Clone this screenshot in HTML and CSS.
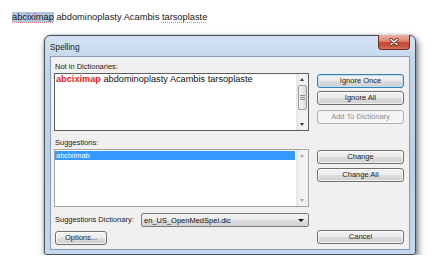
FILE: index.html
```html
<!DOCTYPE html>
<html>
<head>
<meta charset="utf-8">
<link rel="stylesheet" href="styles.css">
</head>
<body>
<p class="doc"><span class="sel miss">abciximap</span> abdominoplasty Acambis <span class="miss">tarsoplaste</span></p>
<div class="window">
  <div class="titlebar">
    <span class="title">Spelling</span>
    <span class="close"><svg width="10" height="8" viewBox="0 0 10 8"><path d="M2 1.5 L8 6.5 M8 1.5 L2 6.5" stroke="#5a2a22" stroke-width="3" stroke-linecap="round"/><path d="M2 1.5 L8 6.5 M8 1.5 L2 6.5" stroke="#ffffff" stroke-width="1.6" stroke-linecap="round"/></svg></span>
  </div>
  <div class="client">
    <div class="leftcol">
      <div class="label first">Not in Dictionaries:</div>
      <div class="box textbox">
        <div class="boxtext"><b class="err">abciximap</b> abdominoplasty Acambis tarsoplaste</div>
        <div class="vscroll">
          <span class="arr up"></span>
          <span class="thumb"><span class="grip"></span></span>
          <span class="track"></span>
          <span class="arr down"></span>
        </div>
      </div>
      <div class="label second">Suggestions:</div>
      <div class="box listbox">
        <div class="boxtext"><div class="item">abciximab</div></div>
        <div class="vscroll disabled">
          <span class="arr up"></span>
          <span class="track"></span>
          <span class="arr down"></span>
        </div>
      </div>
      <div class="dictrow">
        <span class="label">Suggestions Dictionary:</span>
        <div class="combo"><span>en_US_OpenMedSpel.dic</span><span class="caret"></span></div>
      </div>
      <button class="btn options">Options...</button>
    </div>
    <div class="rightcol">
      <button class="btn default">Ignore Once</button>
      <button class="btn b2">Ignore All</button>
      <button class="btn b3" disabled>Add To Dictionary</button>
      <button class="btn b4">Change</button>
      <button class="btn b5">Change All</button>
      <button class="btn cancel">Cancel</button>
    </div>
  </div>
</div>
</body>
</html>
```
FILE: styles.css
```css
html, body {
  margin: 0;
  padding: 0;
  background: #ffffff;
  font-family: "Liberation Sans", Arial, sans-serif;
}

.doc {
  margin: 0;
  padding: 11px 0 0 12px;
  font-size: 9.3px;
  line-height: 12px;
  color: #1a1a1a;
}

.sel {
  background: #b3c5de;
}

.miss {
  text-decoration: underline dotted #e07a7a;
  text-decoration-thickness: 1px;
  text-underline-offset: 1.5px;
}

.window {
  margin: 12px 0 0 44px;
  width: 372px;
  box-sizing: border-box;
  border: 1px solid #48505c;
  border-radius: 6px 6px 3px 3px;
  padding: 0 5px 4px 5px;
  background: linear-gradient(180deg, #d3e3f4 0%, #c2d7ee 12%, #bad1eb 60%, #c3d8ee 100%);
  box-shadow: 2px 4px 7px rgba(0, 0, 0, 0.55), 0 0 3px rgba(0, 0, 0, 0.25);
}

.titlebar {
  height: 20px;
  display: flex;
  align-items: center;
  justify-content: space-between;
}

.title {
  font-size: 8.3px;
  color: #1b1b1b;
  padding-top: 1px;
}

.close {
  align-self: flex-start;
  margin-top: -1px;
  width: 32px;
  height: 15px;
  box-sizing: border-box;
  border: 1px solid #6e2b22;
  border-top: none;
  border-radius: 0 0 4px 4px;
  background: linear-gradient(180deg, #eab2a6 0%, #dc8471 45%, #c94a33 52%, #c8523c 80%, #d97b63 100%);
  display: flex;
  align-items: center;
  justify-content: center;
}

.client {
  height: 194px;
  box-sizing: border-box;
  border: 1px solid #8a9db5;
  background: #f0f0f0;
  display: flex;
  font-size: 7.5px;
  color: #1b1b1b;
}

.leftcol {
  width: 255px;
  margin-left: 3px;
  display: flex;
  flex-direction: column;
}

.label {
  height: 10px;
  line-height: 10px;
  padding-left: 1px;
}

.label.first {
  margin-top: 5px;
}

.label.second {
  margin-top: 7px;
}

.box {
  margin-top: 1px;
  height: 58px;
  box-sizing: border-box;
  background: #ffffff;
  display: flex;
}

.textbox {
  border: 1px solid #5e5e5e;
}

.listbox {
  border: 1px solid #a3a3a3;
}

.boxtext {
  flex: 1;
  padding: 0 0 0 1px;
}

.textbox .boxtext {
  font-size: 9.2px;
  line-height: 11px;
  color: #111111;
}

.err {
  color: #ee2222;
}

.listbox .boxtext {
  padding: 1px 1px 0 0;
}

.item {
  height: 9px;
  line-height: 9px;
  background: #3399ff;
  color: #ffffff;
  padding-left: 1px;
}

.vscroll {
  width: 11px;
  display: flex;
  flex-direction: column;
  background: linear-gradient(90deg, #e6e6e6 0%, #f2f2f2 30%, #f2f2f2 100%);
  border-left: 1px solid #e8e8e8;
}

.arr {
  height: 11px;
  position: relative;
  flex: none;
}

.arr::after {
  content: "";
  position: absolute;
  left: 3px;
  top: 4px;
  border-left: 2.5px solid transparent;
  border-right: 2.5px solid transparent;
}

.arr.up::after {
  border-bottom: 3px solid #3c3c3c;
}

.arr.down::after {
  border-top: 3px solid #3c3c3c;
}

.disabled .arr.up::after {
  border-bottom-color: #a8a8a8;
}

.disabled .arr.down::after {
  border-top-color: #a8a8a8;
}

.thumb {
  height: 25px;
  margin: 0 1px;
  box-sizing: border-box;
  border: 1px solid #9a9a9a;
  border-radius: 2px;
  background: linear-gradient(90deg, #f4f4f4 0%, #e9e9e9 50%, #d9d9d9 100%);
  display: flex;
  align-items: center;
  justify-content: center;
  flex: none;
}

.grip {
  width: 5px;
  height: 5px;
  background: repeating-linear-gradient(180deg, #8a8a8a 0, #8a8a8a 1px, transparent 1px, transparent 2px);
}

.track {
  flex: 1;
}

.dictrow {
  margin-top: 6px;
  height: 14px;
  display: flex;
  align-items: center;
  justify-content: space-between;
}

.combo {
  width: 168px;
  height: 14px;
  box-sizing: border-box;
  border: 1px solid #7a7a7a;
  border-radius: 2px;
  background: linear-gradient(180deg, #f4f4f4 0%, #ececec 50%, #dedede 51%, #d2d2d2 100%);
  display: flex;
  align-items: center;
  justify-content: space-between;
  padding: 0 4px 0 2px;
  color: #111111;
}

.caret {
  width: 0;
  height: 0;
  border-left: 3px solid transparent;
  border-right: 3px solid transparent;
  border-top: 3px solid #111111;
}

.btn {
  display: block;
  width: 87px;
  height: 14px;
  box-sizing: border-box;
  padding: 0;
  margin: 0;
  border: 1px solid #707070;
  border-radius: 3px;
  background: linear-gradient(180deg, #f3f3f3 0%, #ebebeb 50%, #dddddd 51%, #cfcfcf 100%);
  box-shadow: inset 0 0 0 1px rgba(255, 255, 255, 0.7);
  font-family: "Liberation Sans", Arial, sans-serif;
  font-size: 7.5px;
  line-height: 12px;
  color: #1b1b1b;
  text-align: center;
}

.btn.options {
  width: 52px;
  margin: 4px 0 0 1px;
}

.rightcol {
  width: 87px;
  margin-left: 8px;
  padding-top: 17px;
  padding-bottom: 5px;
  display: flex;
  flex-direction: column;
}

.btn.default {
  border-color: #3c7fb1;
  box-shadow: inset 0 0 0 1px #b8e0f6;
}

.btn.b2 {
  margin-top: 3px;
}

.btn.b3 {
  margin-top: 5px;
  border-color: #adb2b5;
  background: #f4f4f4;
  box-shadow: none;
  color: #8f8f8f;
}

.btn.b4 {
  margin-top: 26px;
}

.btn.b5 {
  margin-top: 4px;
}

.btn.cancel {
  margin-top: auto;
}
```
